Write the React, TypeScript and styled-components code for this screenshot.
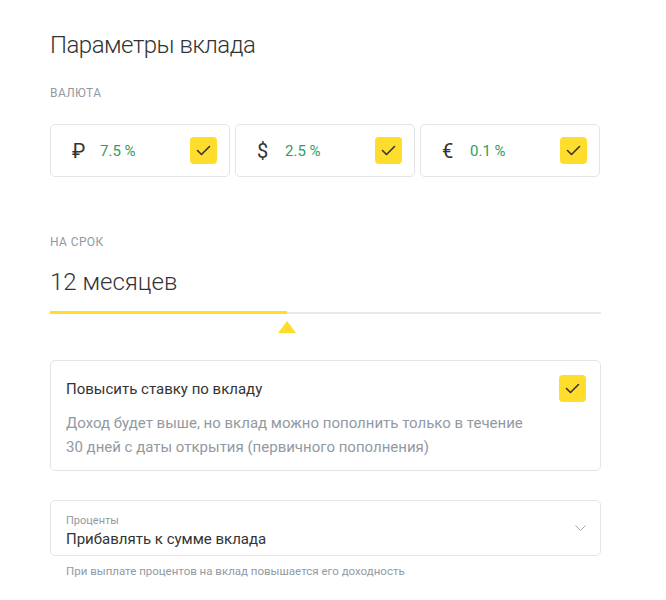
import React from "react";
import styled, { createGlobalStyle } from "styled-components";

const Global = createGlobalStyle`
  html, body { margin: 0; padding: 0; background: #ffffff; }
  body { font-family: Roboto, "Noto Sans", "Liberation Sans", sans-serif; color: #333333; }
  * { box-sizing: border-box; }
`;

const Page = styled.div`
  width: 666px;
  padding: 29px 0 0 50px;
`;

const Column = styled.div`
  width: 551px;
  display: flex;
  flex-direction: column;
`;

const Title = styled.h1`
  margin: 0;
  font-size: 24px;
  line-height: 32px;
  font-weight: 300;
  color: #333333;
  letter-spacing: -0.5px;
`;

const Caption = styled.div<{ $top: number }>`
  margin-top: ${(p) => p.$top}px;
  font-size: 12px;
  line-height: 16px;
  text-transform: uppercase;
  color: #9299a2;
  letter-spacing: 0.4px;
`;

const Cards = styled.div`
  margin-top: 23px;
  width: 550px;
  display: grid;
  grid-template-columns: repeat(3, 1fr);
  gap: 5px;
`;

const Card = styled.div`
  height: 53px;
  border: 1px solid #e3e4e6;
  border-radius: 5px;
  display: flex;
  align-items: center;
  padding: 0 12px 0 21px;
`;

const Symbol = styled.span`
  width: 28px;
  font-size: 20px;
  line-height: 24px;
  color: #333333;
`;

const Rate = styled.span`
  flex: 1;
  font-size: 15px;
  line-height: 20px;
  color: #2f9e60;
`;

const Box = styled.span`
  width: 27px;
  height: 27px;
  border-radius: 4px;
  background: #ffdd2d;
  display: flex;
  align-items: center;
  justify-content: center;
  flex-shrink: 0;
`;

const Term = styled.div`
  margin-top: 16px;
  font-size: 24px;
  line-height: 32px;
  font-weight: 300;
  color: #333333;
`;

const Slider = styled.div`
  position: relative;
  margin-top: 13px;
  height: 22px;
  width: 551px;
`;

const Track = styled.div`
  height: 3px;
  display: flex;
  align-items: center;
`;

const Filled = styled.div`
  height: 3px;
  background: #ffdd2d;
`;

const Rest = styled.div`
  flex: 1;
  height: 2px;
  background: #e8e8e8;
`;

const Thumb = styled.div`
  position: absolute;
  top: 10px;
  width: 0;
  height: 0;
  margin-left: -9px;
  border-left: 9px solid transparent;
  border-right: 9px solid transparent;
  border-bottom: 12px solid #ffdd2d;
`;

const Panel = styled.div`
  margin-top: 27px;
  border: 1px solid #e3e4e6;
  border-radius: 5px;
  padding: 14px 14px 11px 15px;
`;

const PanelHead = styled.div`
  display: flex;
  align-items: center;
  justify-content: space-between;
`;

const PanelTitle = styled.div`
  font-size: 15px;
  line-height: 24px;
  color: #333333;
`;

const PanelText = styled.div`
  margin-top: 9px;
  font-size: 15px;
  line-height: 24px;
  color: #9299a2;
`;

const Select = styled.div`
  margin-top: 29px;
  height: 56px;
  border: 1px solid #e3e4e6;
  border-radius: 5px;
  padding: 12px 14px 0 15px;
  display: flex;
  align-items: center;
  justify-content: space-between;
`;

const SelectBody = styled.div`
  display: flex;
  flex-direction: column;
  align-self: flex-start;
`;

const SelectLabel = styled.div`
  font-size: 11px;
  line-height: 16px;
  color: #9299a2;
`;

const SelectValue = styled.div`
  font-size: 15px;
  line-height: 20px;
  color: #333333;
`;

const Chevron = styled.svg`
  margin-top: -12px;
`;

const Hint = styled.div`
  margin-top: 7px;
  padding-left: 16px;
  font-size: 11.5px;
  line-height: 16px;
  color: #9299a2;
`;

const Check = () => (
  <Box>
    <svg width="27" height="27" viewBox="0 0 27 27">
      <path d="M7.5 13.5 L11.5 17.5 L19.5 9.5" fill="none" stroke="#333333" strokeWidth="1.6" strokeLinecap="round" strokeLinejoin="round" />
    </svg>
  </Box>
);

const currencies = [
  { sym: "₽", rate: "7.5 %" },
  { sym: "$", rate: "2.5 %" },
  { sym: "€", rate: "0.1 %" },
];

export default function App() {
  return (
    <Page>
      <Global />
      <Column>
        <Title>Параметры вклада</Title>
        <Caption $top={24}>Валюта</Caption>
        <Cards>
          {currencies.map((c) => (
            <Card key={c.sym}>
              <Symbol>{c.sym}</Symbol>
              <Rate>{c.rate}</Rate>
              <Check />
            </Card>
          ))}
        </Cards>
        <Caption $top={57}>На срок</Caption>
        <Term>12 месяцев</Term>
        <Slider>
          <Track>
            <Filled style={{ width: "237px" }} />
            <Rest />
          </Track>
          <Thumb style={{ left: "237px" }} />
        </Slider>
        <Panel>
          <PanelHead>
            <PanelTitle>Повысить ставку по вкладу</PanelTitle>
            <Check />
          </PanelHead>
          <PanelText>
            Доход будет выше, но вклад можно пополнить только в течение
            <br />
            30 дней с даты открытия (первичного пополнения)
          </PanelText>
        </Panel>
        <Select>
          <SelectBody>
            <SelectLabel>Проценты</SelectLabel>
            <SelectValue>Прибавлять к сумме вклада</SelectValue>
          </SelectBody>
          <Chevron width="11" height="6" viewBox="0 0 11 6">
            <path d="M0.5 0.5 L5.5 5.5 L10.5 0.5" fill="none" stroke="#a3a8ae" strokeWidth="1" />
          </Chevron>
        </Select>
        <Hint>При выплате процентов на вклад повышается его доходность</Hint>
      </Column>
    </Page>
  );
}
